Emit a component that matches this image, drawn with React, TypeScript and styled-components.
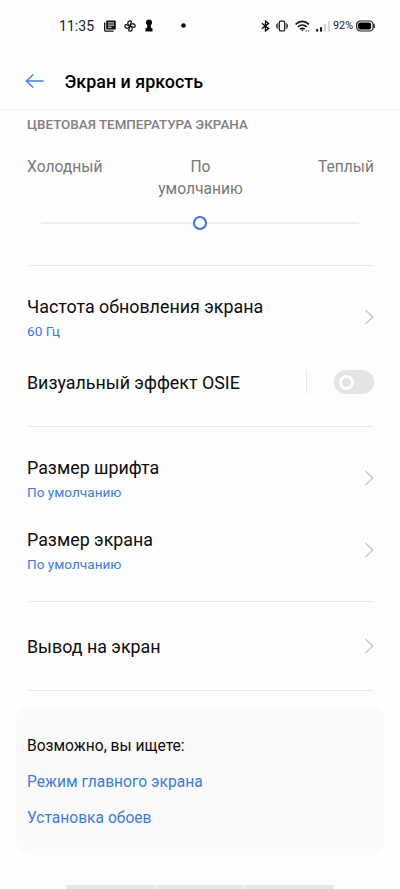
import React from "react";
import styled, { createGlobalStyle } from "styled-components";

const BLUE = "#3a7be8";

const GlobalStyle = createGlobalStyle`
  * { box-sizing: border-box; }
  body {
    margin: 0;
    background: #fefefe;
    color: #0c0c0c;
    font-family: Roboto, "Noto Sans", sans-serif;
  }
  h1, h2, p { margin: 0; }
`;

const Screen = styled.div`
  width: 400px;
  height: 889px;
  display: flex;
  flex-direction: column;
  overflow: hidden;
`;

const StatusBar = styled.header`
  height: 51px;
  padding: 0 25px 0 59px;
  display: flex;
  align-items: center;
  justify-content: space-between;
`;

const StatusGroup = styled.div`
  display: flex;
  align-items: center;
  svg { display: block; flex: none; }
`;

const Clock = styled.span`
  width: 45px;
  font-size: 14.1px;
  line-height: 20px;
  color: #1c1c1c;
`;

const BatteryLevel = styled.span`
  width: 23px;
  font-size: 10.8px;
  line-height: 14px;
  color: #1c1c1c;
`;

const Gap = styled.span<{ $w: number }>`
  flex: none;
  width: ${(p) => p.$w}px;
`;

const TitleBar = styled.div`
  height: 59px;
  padding: 0 25px 1px;
  display: flex;
  align-items: center;
  gap: 20px;
  border-bottom: 1px solid #f2f2f2;
`;

const Title = styled.h1`
  padding-top: 4px;
  font-size: 17.9px;
  line-height: 24px;
  font-weight: 500;
  color: #000;
`;

const BackButton = styled.button`
  padding: 3px 0 0;
  border: 0;
  background: none;
  display: flex;
  width: 19.5px;
`;

const Temperature = styled.section`
  height: 155px;
  padding: 5px 26px 0 27px;
  display: flex;
  flex-direction: column;
`;

const SectionLabel = styled.h2`
  font-size: 13.4px;
  line-height: 20px;
  font-weight: 500;
  color: #808080;
  white-space: nowrap;
`;

const ScaleLabels = styled.div`
  margin-top: 21px;
  display: grid;
  grid-template-columns: 1fr 100px 1fr;
  font-size: 15.65px;
  line-height: 22px;
  color: #787878;
`;

const ScaleLabel = styled.span<{ $align: "left" | "center" | "right" }>`
  text-align: ${(p) => p.$align};
`;

const Slider = styled.div`
  height: 14px;
  margin: 16px 15px 0 14px;
  display: flex;
  align-items: center;
`;

const Track = styled.span`
  flex: 1;
  height: 2px;
  background: #efefef;
`;

const Thumb = styled.span`
  width: 14px;
  height: 14px;
  border: 2.6px solid #3173e6;
  border-radius: 50%;
  background: #fff;
`;

const Divider = styled.hr`
  flex: none;
  width: 347px;
  height: 1px;
  margin: 0 0 0 27px;
  border: 0;
  background: #e9e9e9;
`;

const Group = styled.section`
  padding: 15px 26px 15px 27px;
`;

const Row = styled.div<{ $tall?: boolean }>`
  height: ${(p) => (p.$tall ? 72 : 58)}px;
  display: flex;
  align-items: center;
  justify-content: space-between;
`;

const RowText = styled.div`
  padding-top: 2px;
`;

const RowTitle = styled.p`
  font-size: 17.85px;
  line-height: 26px;
`;

const RowValue = styled.p`
  font-size: 13.6px;
  line-height: 22px;
  color: ${BLUE};
`;

const ToggleArea = styled.div`
  width: 68px;
  height: 24px;
  display: flex;
  justify-content: flex-end;
  border-left: 1px solid #e8e8e8;
`;

const Toggle = styled.button`
  width: 40px;
  height: 24px;
  padding: 0 4.5px;
  border: 0;
  border-radius: 12px;
  background: #e4e4e4;
  display: flex;
  align-items: center;
`;

const Knob = styled.span`
  width: 15px;
  height: 15px;
  border: 3px solid #fff;
  border-radius: 50%;
`;

const Suggestions = styled.section`
  height: 149px;
  margin: 15px 15px 0 16px;
  padding: 22px 11px;
  border-radius: 14px;
  background: #fafafa;
  font-size: 15.6px;
  line-height: 36px;
`;

const SuggestionLink = styled.a`
  display: block;
  color: ${BLUE};
`;

const NavBar = styled.nav`
  margin: auto auto 0;
  width: 268px;
  height: 4px;
  display: grid;
  grid-template-columns: 89.5px 1fr 89.5px;
  gap: 1px;
`;

const NavSegment = styled.span`
  background: #e7e7e7;
`;

const Chevron = () => (
  <svg width="10" height="16" viewBox="0 0 10 16" fill="none" stroke="#c4c4c4" strokeWidth="1.3">
    <path d="M1.2 0.9 8.8 8 1.2 15.1" />
  </svg>
);

const NewsIcon = () => (
  <svg width="12" height="12" viewBox="0 0 12 12">
    <path d="M0.7 2.6V10.2q0 1 1 1H9.6" fill="none" stroke="#111" strokeWidth="1.3" />
    <rect x="2.2" y="0.6" width="9.6" height="9" rx="0.9" fill="#111" />
    <path d="M4 2.9h6M4 5.1h6M4 7.3h3.6" stroke="#fff" strokeWidth="0.95" />
  </svg>
);

const PinwheelIcon = () => (
  <svg width="12" height="12" viewBox="0 0 12 12" fill="none" stroke="#111" strokeWidth="1.25">
    <path d="M6 6C3.9 5.2 3.3 3.4 4.1 1.9 4.8 0.6 7 0.4 7.3 1.7 7.6 3.2 6 4 6 6Z" />
    <path d="M6 6C6.8 3.9 8.6 3.3 10.1 4.1 11.4 4.8 11.6 7 10.3 7.3 8.8 7.6 8 6 6 6Z" />
    <path d="M6 6C8.1 6.8 8.7 8.6 7.9 10.1 7.2 11.4 5 11.6 4.7 10.3 4.4 8.8 6 8 6 6Z" />
    <path d="M6 6C5.2 8.1 3.4 8.7 1.9 7.9 0.6 7.2 0.4 5 1.7 4.7 3.2 4.4 4 6 6 6Z" />
  </svg>
);

const PawnIcon = () => (
  <svg width="8" height="13" viewBox="0 0 8 13" fill="#080808">
    <circle cx="4" cy="3.6" r="3" />
    <path d="M2.2 5h3.6v2L6.2 9.2h1.3v3.3H0.5V9.2H1.8L2.2 7Z" />
  </svg>
);

const DotIcon = () => (
  <svg width="5" height="5" viewBox="0 0 5 5">
    <circle cx="2.5" cy="2.5" r="2.3" fill="#080808" />
  </svg>
);

const BluetoothIcon = () => (
  <svg width="9" height="12" viewBox="0 0 9 12" fill="none" stroke="#111" strokeWidth="1.35">
    <path d="M0.9 3.2 7.6 8.6 4.5 11V1L7.6 3.4 0.9 8.8" />
  </svg>
);

const VibrateIcon = () => (
  <svg width="12" height="12" viewBox="0 0 12 12" fill="none" stroke="#222" strokeWidth="1.3">
    <rect x="3.4" y="1.1" width="5.2" height="9.8" rx="0.9" />
    <path d="M1.7 3v6M10.3 3v6M0.4 4.3v3.4M11.6 4.3v3.4" strokeWidth="0.9" />
  </svg>
);

const WifiIcon = () => (
  <svg width="15" height="12" viewBox="0 0 15 12" fill="none" stroke="#111" strokeWidth="1.5">
    <path d="M0.6 4.4Q7.3-1.6 14 4.4M2.8 6.9q4.5-3.8 9 0M5 9.2q2.3-1.9 4.6 0" />
    <path d="M5.9 9.4h2.8L7.3 11.2Z" fill="#111" stroke="none" />
    <path d="M10.6 10.8h1.2M13 10.8h1.2" strokeWidth="1.2" stroke="#444" />
  </svg>
);

const SignalIcon = () => (
  <svg width="14" height="12" viewBox="0 0 14 12">
    <rect x="0.2" y="9" width="2" height="2.6" fill="#111" />
    <rect x="4" y="7.2" width="2" height="4.4" fill="#111" />
    <rect x="7.9" y="4" width="1.9" height="7.6" fill="#ccc" />
    <rect x="11.8" y="0.6" width="1.9" height="11" fill="#d4d4d4" />
  </svg>
);

const BatteryIcon = () => (
  <svg width="19" height="12" viewBox="0 0 19 12">
    <rect x="0.7" y="1" width="16.4" height="10" rx="3.6" fill="none" stroke="#1a1a1a" strokeWidth="1.2" />
    <rect x="2.1" y="2.4" width="13" height="7.2" rx="2" fill="#000" />
    <path d="M18.1 4.4v3.2" stroke="#1a1a1a" strokeWidth="1.3" strokeLinecap="round" />
  </svg>
);

interface SettingProps {
  title: string;
  value?: string;
}

const Setting = ({ title, value }: SettingProps) => (
  <Row $tall={Boolean(value)}>
    <RowText>
      <RowTitle>{title}</RowTitle>
      {value && <RowValue>{value}</RowValue>}
    </RowText>
    <Chevron />
  </Row>
);

export default function App() {
  return (
    <Screen>
      <GlobalStyle />
      <StatusBar>
        <StatusGroup>
          <Clock>11:35</Clock>
          <NewsIcon />
          <Gap $w={7.5} />
          <PinwheelIcon />
          <Gap $w={9} />
          <PawnIcon />
          <Gap $w={28.2} />
          <DotIcon />
        </StatusGroup>
        <StatusGroup>
          <BluetoothIcon />
          <Gap $w={6} />
          <VibrateIcon />
          <Gap $w={7} />
          <WifiIcon />
          <Gap $w={5.5} />
          <SignalIcon />
          <Gap $w={3.5} />
          <BatteryLevel>92%</BatteryLevel>
          <BatteryIcon />
        </StatusGroup>
      </StatusBar>

      <TitleBar>
        <BackButton aria-label="Назад">
          <svg width="19" height="16" viewBox="0 0 19 16" fill="none" stroke="#3b7df0" strokeWidth="1.4">
            <path d="M18.6 8H1.4M8.2 1.4 1.4 8l6.8 6.6" />
          </svg>
        </BackButton>
        <Title>Экран и яркость</Title>
      </TitleBar>

      <Temperature>
        <SectionLabel>ЦВЕТОВАЯ ТЕМПЕРАТУРА ЭКРАНА</SectionLabel>
        <ScaleLabels>
          <ScaleLabel $align="left">Холодный</ScaleLabel>
          <ScaleLabel $align="center">По умолчанию</ScaleLabel>
          <ScaleLabel $align="right">Теплый</ScaleLabel>
        </ScaleLabels>
        <Slider>
          <Track />
          <Thumb />
          <Track />
        </Slider>
      </Temperature>

      <Divider />
      <Group>
        <Setting title="Частота обновления экрана" value="60 Гц" />
        <Row>
          <RowText>
            <RowTitle>Визуальный эффект OSIE</RowTitle>
          </RowText>
          <ToggleArea>
            <Toggle role="switch" aria-checked={false}>
              <Knob />
            </Toggle>
          </ToggleArea>
        </Row>
      </Group>

      <Divider />
      <Group>
        <Setting title="Размер шрифта" value="По умолчанию" />
        <Setting title="Размер экрана" value="По умолчанию" />
      </Group>

      <Divider />
      <Group>
        <Setting title="Вывод на экран" />
      </Group>
      <Divider />

      <Suggestions>
        <p>Возможно, вы ищете:</p>
        <SuggestionLink>Режим главного экрана</SuggestionLink>
        <SuggestionLink>Установка обоев</SuggestionLink>
      </Suggestions>

      <NavBar>
        <NavSegment />
        <NavSegment />
        <NavSegment />
      </NavBar>
    </Screen>
  );
}
